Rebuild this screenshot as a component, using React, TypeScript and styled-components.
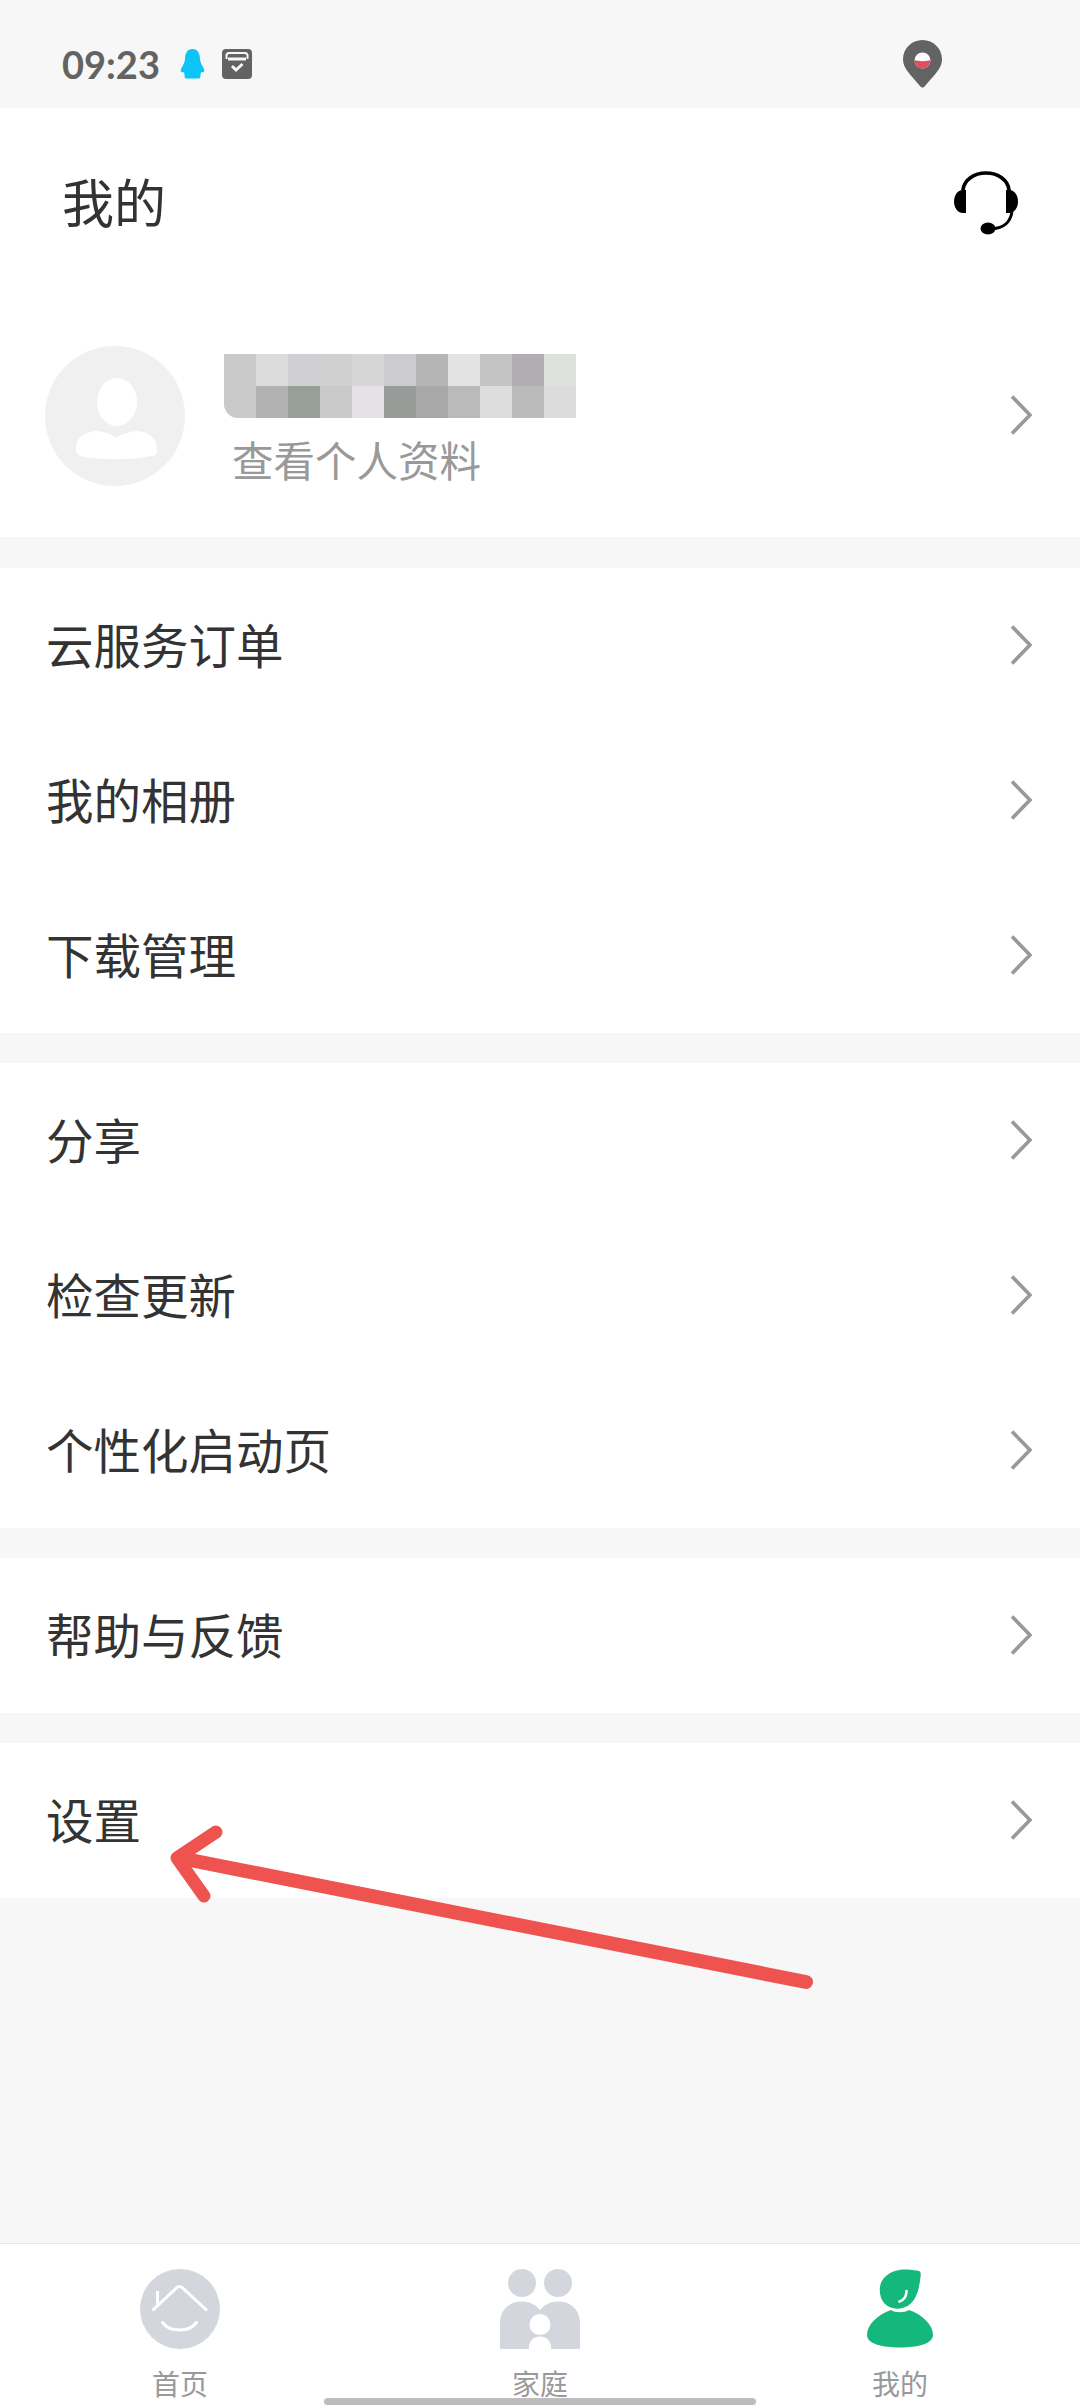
import styled, { createGlobalStyle } from "styled-components";

const GlobalStyle = createGlobalStyle`
  html, body {
    margin: 0;
    padding: 0;
    background: #f7f7f7;
    font-family: "Noto Sans CJK SC", "Noto Sans", sans-serif;
  }
`;

const MOSAIC = [
  "#c9c9c9", "#dcdcdc", "#d0d0d2", "#d0d0d0", "#d5d5d5", "#cccbcd", "#b5b5b5", "#e3e3e3", "#c3c3c3", "#b0aeb0", "#dde2dc",
  "#c9c9c9", "#b2b2b2", "#989e98", "#c9c9c9", "#e4e2e6", "#989b97", "#a8a8a8", "#bababa", "#dddddd", "#bbbbbb", "#dcdcdc",
];

const MENU_GROUPS = [
  ["云服务订单", "我的相册", "下载管理"],
  ["分享", "检查更新", "个性化启动页"],
  ["帮助与反馈"],
  ["设置"],
];

const Chevron = () => (
  <ChevronIcon viewBox="0 0 22 40">
    <path d="M2 1.5 L20 20 L2 38.5" fill="none" stroke="#999" strokeWidth="3.6" />
  </ChevronIcon>
);

const Penguin = () => (
  <StatusIcon width="25" height="30" viewBox="0 0 25 30">
    <path
      d="M12.5 0 C18 0 20 5 20 10 C20 13 22 16 24 20 C25 23 23 24 21 23 L20.5 26 C20 28 21 29.5 18 29.5 H7 C4 29.5 5 28 4.5 26 L4 23 C2 24 0 23 1 20 C3 16 5 13 5 10 C5 5 7 0 12.5 0Z"
      fill="#0cc4f7"
    />
  </StatusIcon>
);

const BoxIcon = () => (
  <StatusIcon width="30" height="30" viewBox="0 0 30 30">
    <rect width="30" height="30" rx="4" fill="#636363" />
    <path d="M4.5 10 V6.5 C4.5 5 5.5 4 7 4 H23 C24.5 4 25.5 5 25.5 6.5 V10" fill="none" stroke="#f7f7f7" strokeWidth="2" />
    <rect x="6" y="8.5" width="18" height="3" fill="#f7f7f7" />
    <path d="M10 17 L14 21 L20.5 15" fill="none" stroke="#f7f7f7" strokeWidth="3" />
  </StatusIcon>
);

const Pin = () => (
  <svg width="39" height="48" viewBox="0 0 39 48">
    <path d="M19.5 0 C30.5 0 39 8.5 39 19.5 C39 29 30 36 22 46 C20.5 48 18.5 48 17 46 C9 36 0 29 0 19.5 C0 8.5 8.5 0 19.5 0Z" fill="#636363" />
    <circle cx="19.5" cy="20.5" r="8" fill="#fff" />
    <path d="M11.6 20 C15 21.5 24 21.5 27.4 20 C27.5 25 24 28.5 19.5 28.5 C15 28.5 11.5 25 11.6 20Z" fill="#e0505c" />
  </svg>
);

const Headset = () => (
  <svg width="64" height="64" viewBox="0 0 64 64">
    <path d="M9 22 V19 C10 9 20 2 32 2 C44 2 54 9 55 19 V22" fill="none" stroke="#000" strokeWidth="3.6" />
    <path d="M12 19 V42 H9 C3 42 0 36 0 30.5 C0 25 3 19 9 19Z" fill="#000" />
    <path d="M52 19 V42 H55 C61 42 64 36 64 30.5 C64 25 61 19 55 19Z" fill="#000" />
    <path d="M58 41 C56 52 50 57 38 58" fill="none" stroke="#000" strokeWidth="3" />
    <ellipse cx="34" cy="57.5" rx="7.5" ry="6" fill="#000" />
  </svg>
);

const AvatarGlyph = () => (
  <svg width="140" height="140" viewBox="0 0 140 140">
    <ellipse cx="72" cy="56" rx="20" ry="24" fill="#fff" />
    <path d="M31 103 C31 92 38 87 50 85 C58 85 66 88 71 92 C77 88 86 85 94 85 C106 87 112 93 112 105 C112 110 108 110 100 111 C80 114 55 114 40 111 C33 110 31 108 31 103Z" fill="#fff" />
  </svg>
);

const HomeIcon = () => (
  <svg width="80" height="80" viewBox="0 0 80 80">
    <circle cx="40" cy="40" r="40" fill="#d3d6dc" />
    <path d="M12.5 41.5 L37 18.5 Q39.5 16.5 42 18.5 L67 41.5" fill="none" stroke="#fff" strokeWidth="3" />
    <path d="M17.5 22 V37" fill="none" stroke="#fff" strokeWidth="3" />
    <path d="M22.5 53.5 C30 63.5 49 63.5 56.5 53.5" fill="none" stroke="#fff" strokeWidth="3" strokeLinecap="round" />
  </svg>
);

const FamilyIcon = () => (
  <svg width="80" height="80" viewBox="0 0 80 80">
    <circle cx="22" cy="14" r="14" fill="#d3d6dc" />
    <circle cx="58" cy="14" r="14" fill="#d3d6dc" />
    <path d="M0 80 V54 C0 41 9 32.5 22 32.5 C30 32.5 36 36 40 41 C44 36 50 32.5 58 32.5 C71 32.5 80 41 80 54 V80Z" fill="#d3d6dc" />
    <circle cx="40" cy="55.5" r="10.5" fill="#fff" />
    <path d="M29 80 V78 C29 72 34 67.5 40 67.5 C46 67.5 51 72 51 78 V80Z" fill="#fff" />
  </svg>
);

const MeIcon = () => (
  <svg width="66" height="80" viewBox="0 0 66 80">
    <path d="M52 2 C54 3 54 5 53.5 8 C52 20 50 30 42 36 C35 41 24 41 18 35 C11 28 11 14 18 8 C24 2 32 0 40 0.5 C45 1 49 1.3 52 2Z" fill="#14b87c" />
    <path d="M24 41 C28 44 37 44 42 41 C56 46 66 56 66 66 C66 75 50 78.5 33 78.5 C16 78.5 0 75 0 66 C0 56 10 46 24 41Z" fill="#14b87c" />
    <path d="M39.5 22 C39.5 27 37 31 32.5 32.5" fill="none" stroke="#fff" strokeWidth="2.6" strokeLinecap="round" />
  </svg>
);

const App = () => {
  return (
    <Page>
      <GlobalStyle />
      <StatusBar>
        <StatusLeft>
          <Time>09:23</Time>
          <Penguin />
          <BoxIcon />
        </StatusLeft>
        <Pin />
      </StatusBar>

      <Header>
        <Title>我的</Title>
        <Headset />
      </Header>

      <Profile>
        <Avatar>
          <AvatarGlyph />
        </Avatar>
        <ProfileText>
          <Mosaic>
            {MOSAIC.map((color, i) => (
              <MosaicCell key={i} $color={color} />
            ))}
          </Mosaic>
          <ProfileLink>查看个人资料</ProfileLink>
        </ProfileText>
        <Chevron />
      </Profile>

      {MENU_GROUPS.map((group) => (
        <MenuGroup key={group[0]}>
          {group.map((label) => (
            <MenuRow key={label}>
              <MenuLabel>{label}</MenuLabel>
              <Chevron />
            </MenuRow>
          ))}
        </MenuGroup>
      ))}

      <Spacer />

      <TabBar>
        <Tab>
          <TabIcon>
            <HomeIcon />
          </TabIcon>
          <TabLabel>首页</TabLabel>
        </Tab>
        <Tab>
          <TabIcon>
            <FamilyIcon />
          </TabIcon>
          <TabLabel>家庭</TabLabel>
        </Tab>
        <Tab>
          <TabIcon>
            <MeIcon />
          </TabIcon>
          <TabLabel>我的</TabLabel>
        </Tab>
      </TabBar>

      <HomeHandle />

      <Arrow viewBox="0 0 660 175">
        <path d="M646 162 L20 38" fill="none" stroke="#ef5350" strokeWidth="14" strokeLinecap="round" />
        <path d="M56 12 L17 38 L44 76" fill="none" stroke="#ef5350" strokeWidth="13" strokeLinecap="round" strokeLinejoin="round" />
      </Arrow>
    </Page>
  );
};

const Page = styled.div`
  position: relative;
  display: flex;
  flex-direction: column;
  width: 1080px;
  height: 2408px;
  overflow: hidden;
  background: #f7f7f7;
`;

const StatusBar = styled.div`
  display: flex;
  align-items: flex-start;
  justify-content: space-between;
  box-sizing: border-box;
  height: 108px;
  padding: 40px 138px 0 62px;
  background: #f7f7f7;
`;

const StatusLeft = styled.div`
  display: flex;
  align-items: center;
  height: 48px;
`;

const Time = styled.span`
  width: 118px;
  font-family: "Lato", "Roboto", sans-serif;
  font-size: 38px;
  font-weight: 700;
  line-height: 48px;
  color: #636363;
`;

const StatusIcon = styled.svg`
  margin-right: 17px;
`;

const Header = styled.div`
  display: flex;
  align-items: center;
  justify-content: space-between;
  box-sizing: border-box;
  height: 190px;
  padding: 0 62px 0 62px;
  background: #fff;
`;

const Title = styled.h1`
  margin: 0 0 4px;
  font-size: 52px;
  font-weight: 400;
  line-height: 60px;
  color: #333;
`;

const Profile = styled.div`
  display: flex;
  align-items: center;
  box-sizing: border-box;
  height: 239px;
  padding: 0 48px 4px 45px;
  margin-bottom: 31px;
  background: #fff;
`;

const Avatar = styled.div`
  flex: none;
  width: 140px;
  height: 140px;
  border-radius: 50%;
  background: #f0f0f0;
`;

const ProfileText = styled.div`
  flex: 1;
  display: flex;
  flex-direction: column;
  padding: 6px 0 0 39px;
`;

const Mosaic = styled.div`
  display: grid;
  grid-template-columns: repeat(11, 32px);
  grid-auto-rows: 32px;
  width: 352px;
  border-bottom-left-radius: 14px;
  overflow: hidden;
`;

const MosaicCell = styled.div<{ $color: string }>`
  background: ${(props) => props.$color};
`;

const ProfileLink = styled.div`
  margin-top: 17px;
  padding-left: 8px;
  font-size: 41.5px;
  line-height: 48px;
  color: #999;
`;

const MenuGroup = styled.div`
  display: flex;
  flex-direction: column;
  margin-bottom: 30px;
  background: #fff;

  &:last-of-type {
    margin-bottom: 0;
  }
`;

const MenuRow = styled.div`
  display: flex;
  align-items: center;
  justify-content: space-between;
  box-sizing: border-box;
  height: 155px;
  padding: 0 48px 0 46px;
`;

const MenuLabel = styled.span`
  margin-bottom: 4px;
  font-size: 47.5px;
  line-height: 60px;
  color: #333;
`;

const ChevronIcon = styled.svg`
  flex: none;
  width: 22px;
  height: 40px;
  margin-bottom: 2px;
`;

const Spacer = styled.div`
  flex: 1;
`;

const TabBar = styled.div`
  display: grid;
  grid-template-columns: repeat(3, 1fr);
  box-sizing: border-box;
  height: 165px;
  padding-top: 25px;
  border-top: 1px solid #e6e6e6;
  background: #fff;
`;

const Tab = styled.div`
  display: flex;
  flex-direction: column;
  align-items: center;
`;

const TabIcon = styled.div`
  display: flex;
  justify-content: center;
  height: 80px;
`;

const TabLabel = styled.span`
  margin-top: 17px;
  font-size: 28px;
  line-height: 34px;
  color: #999;
`;

const HomeHandle = styled.div`
  position: absolute;
  left: 324px;
  top: 2398px;
  width: 432px;
  height: 7px;
  border-radius: 4px;
  background: #bdbdbd;
`;

const Arrow = styled.svg`
  position: absolute;
  left: 160px;
  top: 1820px;
  width: 660px;
  height: 175px;
`;

export default App;
